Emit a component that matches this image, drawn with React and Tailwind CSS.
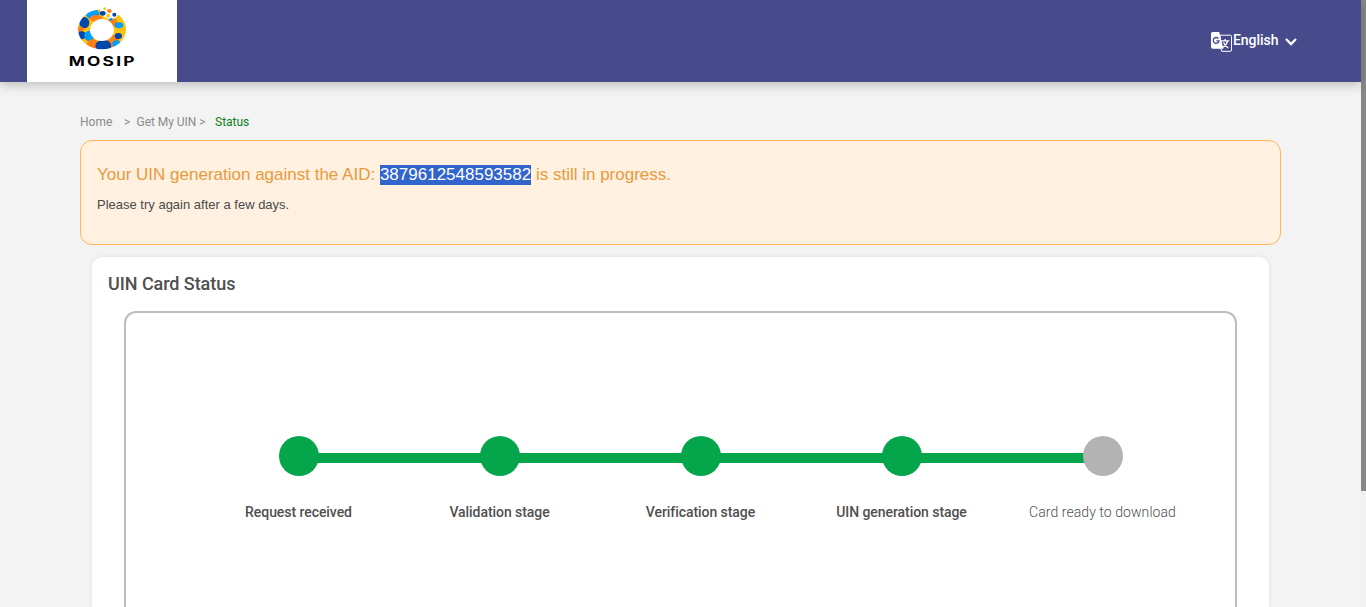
function MosipLogo() {
  return (
    <svg viewBox="0 0 270 246" className="h-[82px] w-[90px]" role="img" aria-label="MOSIP">
      <defs>
        <mask id="ring">
          <rect width="270" height="246" fill="#000" />
          <ellipse cx="126" cy="88" rx="72" ry="60" fill="#fff" />
          <ellipse cx="126" cy="90" rx="36" ry="33" fill="#000" />
          <path d="M119 15 L121 42 L134 52 L150 59 L166 54 L174 44 L200 15 Z" fill="#000" />
        </mask>
      </defs>
      <g mask="url(#ring)">
        <rect x="50" y="20" width="150" height="130" fill="#ffc20e" />
        <ellipse cx="98" cy="42" rx="20" ry="16" fill="#009fff" />
        <ellipse cx="108" cy="55" rx="18" ry="10" fill="#ff7f11" />
        <ellipse cx="73" cy="68" rx="15" ry="17" fill="#0047ae" />
        <ellipse cx="60" cy="88" rx="10" ry="9" fill="#ff7f11" />
        <ellipse cx="65" cy="106" rx="12" ry="12" fill="#0047ae" />
        <ellipse cx="88" cy="108" rx="15" ry="16" fill="#009fff" />
        <ellipse cx="98" cy="132" rx="17" ry="14" fill="#ff7f11" />
        <ellipse cx="156" cy="124" rx="20" ry="20" fill="#ff7f11" />
        <ellipse cx="130" cy="137" rx="24" ry="18" fill="#0047ae" />
        <ellipse cx="170" cy="132" rx="13" ry="11" fill="#009fff" />
        <ellipse cx="156" cy="68" rx="16" ry="16" fill="#ff7f11" />
        <ellipse cx="177" cy="76" rx="13" ry="9" fill="#009fff" />
        <ellipse cx="175" cy="108" rx="11" ry="9" fill="#0047ae" />
      </g>
      <ellipse cx="128" cy="40" rx="9" ry="7" fill="#0047ae" />
      <ellipse cx="148" cy="33" rx="7" ry="6" fill="#ff7f11" />
      <circle cx="134" cy="26" r="4" fill="#ffc20e" />
      <circle cx="144" cy="47" r="6" fill="#ffc20e" />
      <circle cx="163" cy="44" r="6" fill="#0047ae" />
      <circle cx="153" cy="58" r="5" fill="#009fff" />
      <text
        x="26"
        y="197"
        textLength="204"
        lengthAdjust="spacingAndGlyphs"
        fill="#000"
        fontSize="39"
        fontWeight="700"
        fontFamily="Inter, sans-serif"
        letterSpacing="5"
      >
        MOSIP
      </text>
    </svg>
  );
}

function TranslateIcon() {
  return (
    <svg viewBox="0 0 22 20" className="h-5 w-[22px]" fill="none" aria-hidden="true">
      <path d="M9 3.2 H19.2 A1.3 1.3 0 0 1 20.5 4.5 V18 A1.3 1.3 0 0 1 19.2 19.3 H10.8 L9.7 16.5 Z" stroke="#fff" />
      <path d="M1.8 0 H8.2 L12.4 16.8 H1.8 A1.8 1.8 0 0 1 0 15 V1.8 A1.8 1.8 0 0 1 1.8 0 Z" fill="#fff" />
      <path d="M7.4 6.6 A2.9 2.9 0 1 0 8 8.8 H5.4" stroke="#474a8b" strokeWidth="1.3" />
      <path d="M10 8.8 H18.3 M14.1 7 V8.8 M16.6 8.8 C16 11.5 14.2 13.9 11.6 15.5 M12.5 10.4 C13.3 12.6 15 14.5 17.3 16" stroke="#fff" strokeWidth="1.3" />
    </svg>
  );
}

function Header() {
  return (
    <header className="relative z-10 flex h-[82px] shrink-0 justify-between bg-[#474a8b] pl-[27px] shadow-[0_3px_10px_rgba(0,0,0,0.22)]">
      <div className="flex w-[150px] bg-white pl-[33px]">
        <MosipLogo />
      </div>
      <button className="mr-[64px] flex h-[82px] items-center text-left text-white">
        <span className="mt-[2px]">
          <TranslateIcon />
        </span>
        <span className="-mt-[2px] w-[52px] whitespace-nowrap text-[14px] font-medium leading-5 tracking-[-0.05px]">
          English
        </span>
        <svg viewBox="0 0 12 8" className="mt-[1px] h-2 w-3" fill="none" aria-hidden="true">
          <path d="M1 1 L6 6 L11 1" stroke="#fff" strokeWidth="2.3" />
        </svg>
      </button>
    </header>
  );
}

const steps = [
  { label: 'Request received', done: true },
  { label: 'Validation stage', done: true },
  { label: 'Verification stage', done: true },
  { label: 'UIN generation stage', done: true },
  { label: 'Card ready to download', done: false },
];

function Step({ label, done, first }) {
  return (
    <li className="relative flex w-[201px] flex-col items-center">
      {!first && <span className="absolute right-[100px] top-[17px] h-[10px] w-[201px] bg-[#05a64b]" />}
      <span className={`relative z-10 size-10 rounded-full ${done ? 'bg-[#05a64b]' : 'bg-[#b3b3b3]'}`} />
      <span
        className={`mt-[26px] whitespace-nowrap text-[14px] leading-5 ${
          done ? 'font-medium tracking-[-0.06px] text-[#4f4f4f]' : 'font-light tracking-[0.07px] text-[#4f4f4f]'
        }`}
      >
        {label}
      </span>
    </li>
  );
}

export default function App() {
  return (
    <div className="flex h-[607px] w-[1366px] overflow-hidden bg-[#f3f3f3] font-[Roboto,sans-serif]">
      <div className="flex w-[1361px] flex-col">
        <Header />
        <main className="flex flex-1 flex-col px-20 pt-[30px]">
          <nav className="flex h-5 items-center whitespace-nowrap text-[12px] text-[#8b8b8b]">
            <span className="w-11">Home</span>
            <span className="w-[12.5px]">&gt;</span>
            <span className="w-[78.5px] tracking-[-0.03px]">Get My UIN &gt;</span>
            <span className="text-[#0b8020]">Status</span>
          </nav>
          <section className="mt-[8px] h-[105px] shrink-0 rounded-[12px] border border-[#ffb55c] bg-[#fff0e0] px-4 pt-[24px] font-['Liberation_Sans',sans-serif]">
            <p className="whitespace-nowrap text-[17px] leading-[20px] text-[#e89a3c]">
              Your UIN generation against the AID:{' '}
              <span className="inline-block h-5 bg-[#3264cd] text-white">3879612548593582</span> is still in progress.
            </p>
            <p className="mt-[11px] text-[13px] leading-[18px] text-[#4a4a4a]">Please try again after a few days.</p>
          </section>
          <section className="mx-3 mt-3 flex flex-1 flex-col rounded-t-[10px] bg-white px-8 pt-[15px] shadow-[0_0_5px_rgba(0,0,0,0.08)]">
            <h1 className="-ml-4 text-[18px] font-medium leading-6 tracking-[-0.06px] text-[#4f4f4f]">UIN Card Status</h1>
            <div className="mt-[15px] flex-1 rounded-t-[12px] border-2 border-b-0 border-[#bcbcbc] pl-[72px] pt-[123px]">
              <ol className="flex">
                {steps.map((step, i) => (
                  <Step key={step.label} {...step} first={i === 0} />
                ))}
              </ol>
            </div>
          </section>
        </main>
      </div>
      <div className="w-[5px] bg-[#f1f1f1]">
        <div className="h-[491px] bg-[#888]" />
      </div>
    </div>
  );
}
